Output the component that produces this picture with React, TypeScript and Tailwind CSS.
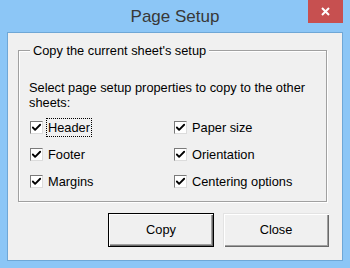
import { Check } from "lucide-react";

type Opt = { label: string; focus?: boolean };

const left: Opt[] = [{ label: "Header", focus: true }, { label: "Footer" }, { label: "Margins" }];
const right: Opt[] = [{ label: "Paper size" }, { label: "Orientation" }, { label: "Centering options" }];

function CheckRow({ label, focus }: Opt) {
  return (
    <div className="flex items-center h-[27px]">
      <span className="w-[13px] h-[13px] border border-t-[#7a7a7a] border-l-[#7a7a7a] border-b-[#dcdcdc] border-r-[#dcdcdc] bg-white flex items-center justify-center">
        <Check size={11} strokeWidth={4} className="text-black" />
      </span>
      <span
        className={
          focus
            ? "ml-[3px] px-[1px] leading-[17px] border border-dotted border-black"
            : "ml-[4px] leading-[17px] border border-transparent"
        }
      >
        {label}
      </span>
    </div>
  );
}

export default function App() {
  return (
    <div
      className="w-[350px] h-[268px] bg-[#8cc6f6] flex flex-col text-[12.8px] text-black"
      style={{ fontFamily: '"Liberation Sans", Arial, sans-serif' }}
    >
      {/* title bar */}
      <div className="h-[32px] flex items-start">
        <div className="w-[42px]" />
        <div className="flex-1 text-center text-[17px] leading-[33px] text-[#383838]">Page Setup</div>
        <button className="w-[35px] h-[23px] mr-[7px] bg-[#c75050] flex items-center justify-center">
          <svg width="9" height="9" viewBox="0 0 9 9">
            <path d="M1 1L8 8M8 1L1 8" stroke="#fff" strokeWidth="2" />
          </svg>
        </button>
      </div>

      {/* client */}
      <div className="mx-[7px] h-[229px] border border-[#6fa7d6] bg-[#f0f0f0] flex flex-col">
        <fieldset className="ml-[10px] mt-[9px] w-[309px] h-[160px] border border-[#a0a0a0] shadow-[1px_1px_0_#fff,inset_1px_1px_0_#fff]">
          <legend className="ml-[11px] px-[3px] bg-[#f0f0f0] leading-[17px]">Copy the current sheet's setup</legend>
          <div className="pl-[10px] pt-[21px] leading-[15px]">
            Select page setup properties to copy to the other
            <br />
            sheets:
          </div>
          <div className="flex pl-[11px] pt-[4px]">
            <div className="w-[144px] flex flex-col">
              {left.map((o) => (
                <CheckRow key={o.label} {...o} />
              ))}
            </div>
            <div className="flex flex-col">
              {right.map((o) => (
                <CheckRow key={o.label} {...o} />
              ))}
            </div>
          </div>
        </fieldset>

        <div className="flex justify-end gap-[9px] mt-[11px] mr-[13px]">
          <button className="w-[106px] h-[34px] border border-black bg-[#f0f0f0] shadow-[inset_1px_1px_0_#fff,inset_-1px_-1px_0_#696969,inset_-2px_-2px_0_#a0a0a0]">
            Copy
          </button>
          <button className="w-[106px] h-[34px] bg-[#f0f0f0] shadow-[inset_1px_1px_0_#e3e3e3,inset_2px_2px_0_#fff,inset_-1px_-1px_0_#696969,inset_-2px_-2px_0_#a0a0a0]">
            Close
          </button>
        </div>
      </div>
    </div>
  );
}
